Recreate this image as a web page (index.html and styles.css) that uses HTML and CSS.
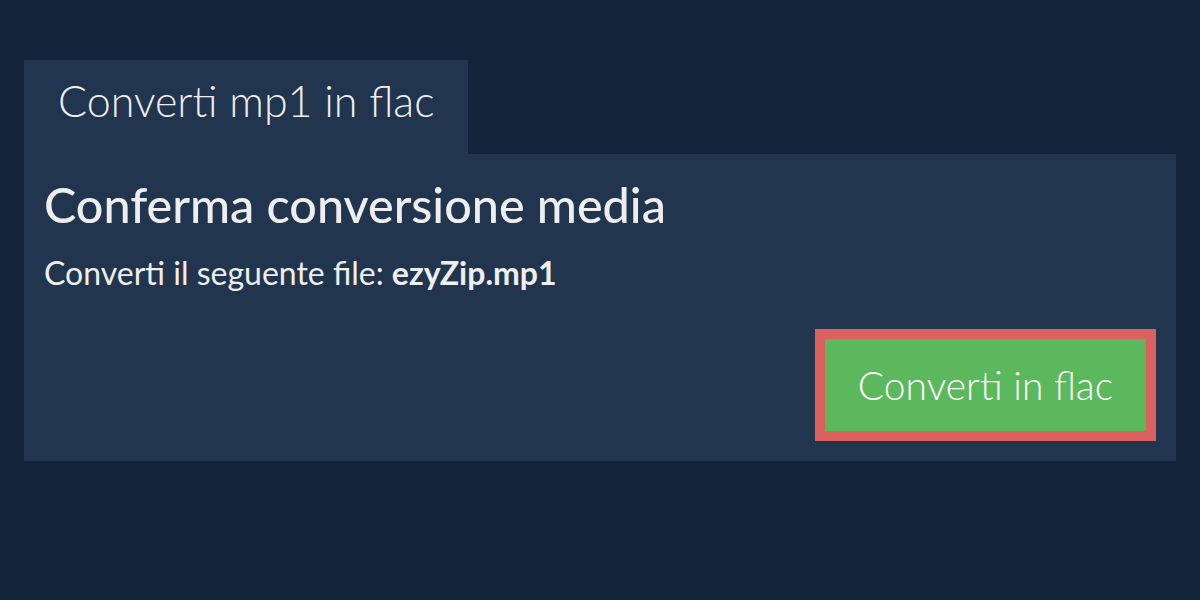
FILE: index.html
```html
<!DOCTYPE html>
<html lang="it">
  <head>
    <meta charset="UTF-8" />
    <meta name="viewport" content="width=device-width, initial-scale=1.0" />
    <title>Converti mp1 in flac</title>
    <link rel="stylesheet" href="styles.css">
  </head>
  <body>
    <div class="convert-box">
      <div class="convert-tab">Converti mp1 in flac</div>
      <div class="convert-panel">
        <h2 class="panel-title">Conferma conversione media</h2>
        <p class="panel-text">Converti il seguente file: <b>ezyZip.mp1</b></p>
        <div class="panel-actions">
          <button type="button" class="convert-btn">Converti in flac</button>
        </div>
      </div>
    </div>
  </body>
</html>
```

FILE: styles.css
```css
body {
  margin: 0;
  background: #11243a;
  font-family: Lato, "Liberation Sans", sans-serif;
  color: #eeeeee;
}

.convert-box {
  padding: 60px 24px 0;
}

.convert-tab {
  display: inline-block;
  background: #21354e;
  font-size: 43px;
  font-weight: 300;
  height: 94px;
  line-height: 81px;
  padding: 0 34px;
  box-sizing: border-box;
}

.convert-panel {
  background: #21354e;
  padding: 20px;
}

.panel-title {
  margin: 0;
  font-size: 48.5px;
  font-weight: 500;
  line-height: 60px;
}

.panel-text {
  margin: 19px 0 0;
  font-size: 32px;
  line-height: 39px;
}

.panel-actions {
  display: flex;
  justify-content: flex-end;
  margin-top: 37px;
}

.convert-btn {
  background: #5cb85c;
  color: #ffffff;
  border: 10px solid #dc605e;
  font-family: inherit;
  font-size: 39px;
  font-weight: 300;
  width: 341px;
  height: 112px;
  padding: 0;
}
```
